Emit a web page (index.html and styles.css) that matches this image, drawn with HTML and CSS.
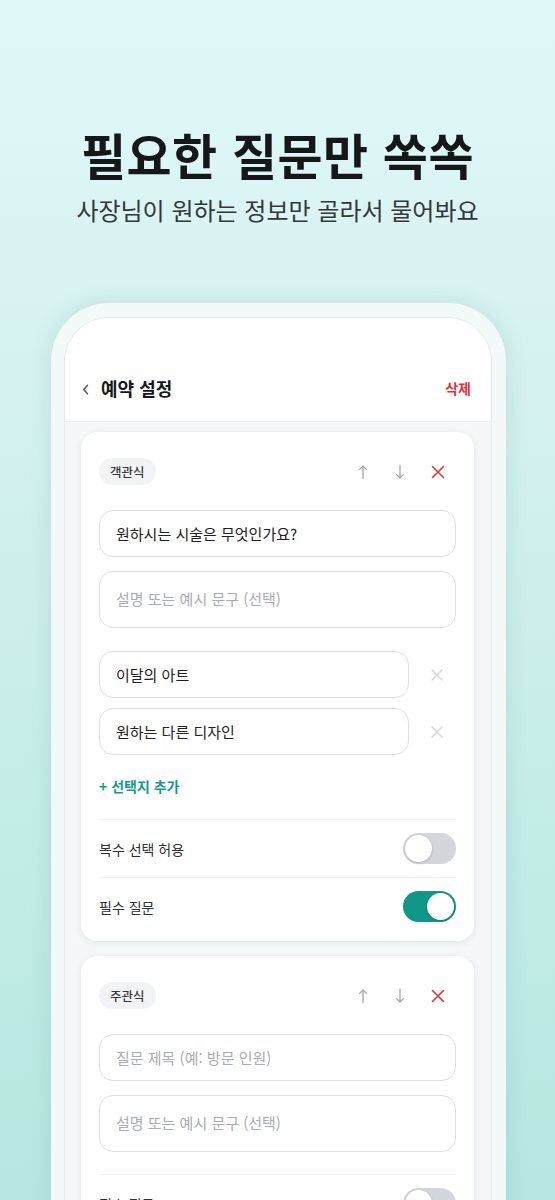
FILE: index.html
```html
<!DOCTYPE html>
<html lang="ko">
<head>
<meta charset="utf-8">
<title>필요한 질문만 쏙쏙</title>
<link rel="stylesheet" href="styles.css">
</head>
<body>
<div class="page">
  <section class="hero">
    <h1 class="headline">필요한 질문만 쏙쏙</h1>
    <p class="subline">사장님이 원하는 정보만 골라서 물어봐요</p>
  </section>

  <div class="phone">
    <div class="screen">
      <header class="appbar">
        <div class="appbar-left">
          <svg class="back" width="7" height="11" viewBox="0 0 7 11"><path d="M5.5 1.2 L1.8 5.5 L5.5 9.8" fill="none" stroke="#555" stroke-width="1.5" stroke-linecap="round" stroke-linejoin="round"/></svg>
          <span class="appbar-title">예약 설정</span>
        </div>
        <span class="appbar-action">삭제</span>
      </header>

      <main class="content">
        <section class="card">
          <div class="card-head">
            <span class="chip">객관식</span>
            <div class="tools">
              <svg class="tool" width="12" height="16" viewBox="0 0 12 16"><path d="M6 14.5 V2 M2.6 5.4 L6 2 L9.4 5.4" fill="none" stroke="#a3a6aa" stroke-width="1.3" stroke-linecap="round" stroke-linejoin="round"/></svg>
              <svg class="tool" width="12" height="16" viewBox="0 0 12 16"><path d="M6 1.5 V14 M2.6 10.6 L6 14 L9.4 10.6" fill="none" stroke="#a3a6aa" stroke-width="1.3" stroke-linecap="round" stroke-linejoin="round"/></svg>
              <svg class="tool" width="14" height="14" viewBox="0 0 14 14"><path d="M1.5 1.5 L12.5 12.5 M12.5 1.5 L1.5 12.5" fill="none" stroke="#d8383c" stroke-width="1.6" stroke-linecap="round"/></svg>
            </div>
          </div>
          <div class="field">원하시는 시술은 무엇인가요?</div>
          <div class="field area placeholder">설명 또는 예시 문구 (선택)</div>
          <div class="options">
            <div class="option">
              <div class="field">이달의 아트</div>
              <svg class="opt-x" width="14" height="14" viewBox="0 0 14 14"><path d="M2 2 L12 12 M12 2 L2 12" fill="none" stroke="#d4d6d9" stroke-width="1.4" stroke-linecap="round"/></svg>
            </div>
            <div class="option">
              <div class="field">원하는 다른 디자인</div>
              <svg class="opt-x" width="14" height="14" viewBox="0 0 14 14"><path d="M2 2 L12 12 M12 2 L2 12" fill="none" stroke="#d4d6d9" stroke-width="1.4" stroke-linecap="round"/></svg>
            </div>
          </div>
          <div class="add">+ 선택지 추가</div>
          <div class="row">
            <span class="row-label">복수 선택 허용</span>
            <span class="toggle"><span class="knob"></span></span>
          </div>
          <div class="row">
            <span class="row-label">필수 질문</span>
            <span class="toggle on"><span class="knob"></span></span>
          </div>
        </section>

        <section class="card">
          <div class="card-head">
            <span class="chip">주관식</span>
            <div class="tools">
              <svg class="tool" width="12" height="16" viewBox="0 0 12 16"><path d="M6 14.5 V2 M2.6 5.4 L6 2 L9.4 5.4" fill="none" stroke="#a3a6aa" stroke-width="1.3" stroke-linecap="round" stroke-linejoin="round"/></svg>
              <svg class="tool" width="12" height="16" viewBox="0 0 12 16"><path d="M6 1.5 V14 M2.6 10.6 L6 14 L9.4 10.6" fill="none" stroke="#a3a6aa" stroke-width="1.3" stroke-linecap="round" stroke-linejoin="round"/></svg>
              <svg class="tool" width="14" height="14" viewBox="0 0 14 14"><path d="M1.5 1.5 L12.5 12.5 M12.5 1.5 L1.5 12.5" fill="none" stroke="#d8383c" stroke-width="1.6" stroke-linecap="round"/></svg>
            </div>
          </div>
          <div class="field placeholder">질문 제목 (예: 방문 인원)</div>
          <div class="field area placeholder">설명 또는 예시 문구 (선택)</div>
          <div class="row first">
            <span class="row-label">필수 질문</span>
            <span class="toggle"><span class="knob"></span></span>
          </div>
        </section>
      </main>
    </div>
  </div>
</div>
</body>
</html>
```

FILE: styles.css
```css
* { box-sizing: border-box; }

html, body {
  margin: 0;
  padding: 0;
}

body {
  width: 555px;
  height: 1200px;
  overflow: hidden;
  font-family: "Noto Sans CJK KR", "Noto Sans", sans-serif;
  background: linear-gradient(180deg, #e1f8f9 0%, #d6f2f0 30%, #c6ede8 65%, #b6e7e0 100%);
  color: #222;
}

.page {
  display: flex;
  flex-direction: column;
  align-items: center;
}

.hero {
  display: flex;
  flex-direction: column;
  align-items: center;
  padding-top: 124px;
}

.headline {
  margin: 0;
  font-size: 49px;
  line-height: 60px;
  font-weight: 700;
  color: #151718;
  letter-spacing: 0.5px;
}

.subline {
  margin: 10px 0 0;
  font-size: 24px;
  line-height: 32px;
  font-weight: 400;
  color: #33373a;
}

.phone {
  margin-top: 77px;
  margin-left: 2px;
  width: 455px;
  height: 960px;
  padding: 14px 14px 0 13px;
  background: #f3f8f8;
  border-radius: 58px 58px 0 0;
  box-shadow: 0 0 22px rgba(40, 110, 100, 0.14);
}

.screen {
  height: 100%;
  background: #f5f7f8;
  border: 1px solid #e6ecec;
  border-bottom: 0;
  border-radius: 45px 45px 0 0;
  overflow: hidden;
}

.appbar {
  background: #ffffff;
  height: 104px;
  padding: 52px 20px 0 17px;
  display: flex;
  justify-content: space-between;
  align-items: flex-start;
  border-bottom: 1px solid #eef1f2;
}

.appbar-left {
  height: 36px;
  display: flex;
  align-items: center;
  gap: 12px;
}

.back { display: block; margin-top: 2px; }

.appbar-title {
  font-size: 18px;
  font-weight: 700;
  color: #16181a;
}

.appbar-action {
  height: 36px;
  line-height: 36px;
  font-size: 14px;
  font-weight: 700;
  color: #d6383c;
}

.content {
  padding: 10px 17px 0 16px;
  display: flex;
  flex-direction: column;
  gap: 15px;
}

.card {
  background: #ffffff;
  border-radius: 16px;
  box-shadow: 0 2px 8px rgba(20, 40, 50, 0.07), 0 0 1px rgba(20, 40, 50, 0.06);
  padding: 26px 18px 6px;
  display: flex;
  flex-direction: column;
}

.card-head {
  height: 27px;
  display: flex;
  justify-content: space-between;
  align-items: center;
  margin-bottom: 25px;
}

.chip {
  height: 27px;
  padding: 0 11px;
  border-radius: 14px;
  background: #f1f3f4;
  font-size: 12.5px;
  line-height: 27px;
  color: #35383b;
  font-weight: 500;
}

.tools {
  display: flex;
  align-items: center;
  gap: 25px;
  padding-right: 11px;
}

.tool { display: block; }

.field {
  height: 47px;
  border: 1px solid #dcdfe2;
  border-radius: 14px;
  padding: 0 16px;
  display: flex;
  align-items: center;
  font-size: 15px;
  color: #1e2022;
}

.field + .field { margin-top: 14px; }

.field.area {
  height: 57px;
  padding-bottom: 3px;
}

.placeholder { color: #a9acb0; }

.options {
  margin-top: 23px;
  display: flex;
  flex-direction: column;
  gap: 10px;
}

.option {
  display: flex;
  align-items: center;
}

.option .field {
  flex: 0 0 310px;
}

.opt-x {
  margin-left: 21px;
}

.add {
  margin-top: 16px;
  height: 30px;
  line-height: 30px;
  font-size: 14px;
  font-weight: 700;
  color: #16998b;
}

.row {
  height: 58px;
  border-top: 1px solid #f0f2f3;
  display: flex;
  align-items: center;
  justify-content: space-between;
}

.add + .row { margin-top: 18px; }

.row.first { margin-top: 22px; }

.row-label {
  font-size: 14px;
  color: #2e3133;
}

.toggle {
  width: 53px;
  height: 31px;
  border-radius: 16px;
  background: #d3d6da;
  padding: 2px;
  display: flex;
  align-items: center;
}

.knob {
  width: 27px;
  height: 27px;
  border-radius: 50%;
  background: #ffffff;
  box-shadow: 0 1px 3px rgba(0, 0, 0, 0.18);
}

.toggle.on {
  background: #11968a;
  justify-content: flex-end;
}
```
